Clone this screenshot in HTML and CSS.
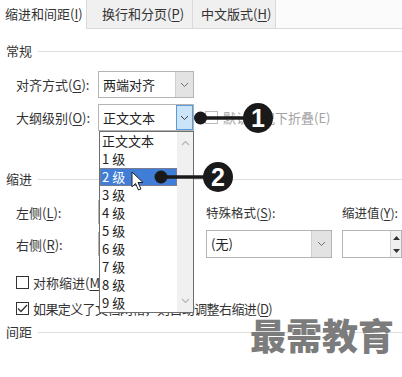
FILE: index.html
```html
<!DOCTYPE html>
<html lang="zh-CN">
<head>
    <meta charset="UTF-8">
    <title>段落</title>
    <link rel="stylesheet" href="styles.css">
</head>
<body>

    <div class="dialog">
        <div class="tabs">
            <div class="tab active">缩进和间距(<u>I</u>)</div>
            <div class="tab tab-2">换行和分页(<u>P</u>)</div>
            <div class="tab tab-3">中文版式(<u>H</u>)</div>
            <div class="tab-fill"></div>
        </div>

        <div class="group-title title-general">常规</div>

        <div class="form-row row-align">
            <span class="label">对齐方式(<u>G</u>):</span>
            <div class="select">
                <span class="value">两端对齐</span>
                <span class="arrow"><svg width="9" height="6" viewBox="0 0 9 6"><path d="M1 1 L4.5 4.5 L8 1" fill="none" stroke="#707070" stroke-width="1"/></svg></span>
            </div>
        </div>

        <div class="form-row row-outline">
            <span class="label">大纲级别(<u>O</u>):</span>
            <div class="select focused">
                <span class="value">正文文本</span>
                <span class="arrow"><svg width="9" height="6" viewBox="0 0 9 6"><path d="M1 1 L4.5 4.5 L8 1" fill="none" stroke="#404040" stroke-width="1"/></svg></span>
            </div>
            <span class="check disabled"><span class="box"></span>默认情况下折叠(E)</span>
        </div>

        <div class="group-title title-indent">缩进</div>

        <div class="indent-grid">
            <span class="label">左侧(<u>L</u>):</span>
            <div class="spin"></div>
            <span class="label top-label">特殊格式(<u>S</u>):</span>
            <span class="label top-label">缩进值(<u>Y</u>):</span>

            <span class="label">右侧(<u>R</u>):</span>
            <div class="spin"></div>
            <div class="select wide">
                <span class="value">(无)</span>
                <span class="arrow"><svg width="9" height="6" viewBox="0 0 9 6"><path d="M1 1 L4.5 4.5 L8 1" fill="none" stroke="#707070" stroke-width="1"/></svg></span>
            </div>
            <div class="spin small">
                <span class="spin-buttons">
                    <svg width="7" height="4" viewBox="0 0 7 4"><path d="M0 4 L3.5 0 L7 4 Z" fill="#333"/></svg>
                    <svg width="7" height="4" viewBox="0 0 7 4"><path d="M0 0 L3.5 4 L7 0 Z" fill="#333"/></svg>
                </span>
            </div>
        </div>

        <div class="check-row row-mirror"><span class="box"></span>对称缩进(<u>M</u>)</div>
        <div class="check-row row-grid"><span class="box"><svg width="11" height="9" viewBox="0 0 11 9"><path d="M1 4.5 L4 7.5 L10 1" fill="none" stroke="#333" stroke-width="1.3"/></svg></span><span class="tight">如果定义了文档网格，则自动调整右缩进(<u>D</u>)</span></div>

        <div class="group-title title-spacing">间距</div>
    </div>

    <!-- 展开的下拉列表 -->
    <div class="dropdown">
        <ul class="options">
            <li>正文文本</li>
            <li>1 级</li>
            <li class="selected">2 级</li>
            <li>3 级</li>
            <li>4 级</li>
            <li>5 级</li>
            <li>6 级</li>
            <li>7 级</li>
            <li>8 级</li>
            <li>9 级</li>
        </ul>
        <div class="scrollbar">
            <svg width="9" height="6" viewBox="0 0 9 6"><path d="M1 5 L4.5 1.5 L8 5" fill="none" stroke="#b5b5b5" stroke-width="1.2"/></svg>
            <svg width="9" height="6" viewBox="0 0 9 6"><path d="M1 1 L4.5 4.5 L8 1" fill="none" stroke="#b5b5b5" stroke-width="1.2"/></svg>
        </div>
    </div>

    <svg class="cursor" width="14" height="21" viewBox="0 0 14 21">
        <path d="M1 1 L1 16 L4.5 12.5 L7.5 19 L10 18 L7 11.5 L12 11.5 Z" fill="#fff" stroke="#222" stroke-width="1" stroke-linejoin="round"/>
    </svg>

    <!-- 标注 -->
    <svg class="callouts" width="402" height="377" viewBox="0 0 402 377">
        <line x1="200" y1="118" x2="250" y2="118" stroke="#1a1a1a" stroke-width="3.5"/>
        <circle cx="200.5" cy="118" r="6.5" fill="#1a1a1a"/>
        <circle cx="258" cy="118" r="15" fill="#1a1a1a"/>
        <text x="258" y="127" class="num">1</text>

        <line x1="161" y1="177" x2="210" y2="177" stroke="#1a1a1a" stroke-width="3.5"/>
        <circle cx="161" cy="177" r="6.5" fill="#1a1a1a"/>
        <circle cx="218" cy="177" r="15" fill="#1a1a1a"/>
        <text x="218" y="186" class="num">2</text>
    </svg>

    <div class="watermark">最需教育</div>

</body>
</html>
```
FILE: styles.css
```css
body {
    margin: 0;
    width: 402px;
    height: 377px;
    overflow: hidden;
    position: relative;
    background: #fff;
    font-family: "Noto Sans CJK SC", "Liberation Sans", sans-serif;
    font-size: 13px;
    color: #222;
}
.dialog {
    width: 402px;
    overflow: hidden;
}
u {
    text-decoration: underline;
    text-underline-offset: 2px;
}

/* 选项卡 */
.tabs {
    display: flex;
    height: 29px;
}
.tab {
    box-sizing: border-box;
    height: 29px;
    line-height: 28px;
    border-bottom: 1px solid #d9d9d9;
    background: #f0f0f0;
    border-left: 1px solid #d9d9d9;
    color: #333;
    white-space: nowrap;
}
.tab.active {
    width: 86px;
    padding-left: 5px;
    background: #fff;
    border-left: none;
    border-bottom-color: #fff;
}
.tab-2 {
    width: 106px;
    padding-left: 15px;
}
.tab-3 {
    width: 84px;
    padding-left: 8px;
    border-right: 1px solid #d9d9d9;
}
.tab-fill {
    flex: 1;
    border-bottom: 1px solid #d9d9d9;
    background: #fbfbfb;
}

/* 分组标题 */
.group-title {
    display: flex;
    align-items: center;
    height: 20px;
    line-height: 20px;
    padding-left: 6px;
    color: #333;
}
.group-title::after {
    content: "";
    flex: 1;
    height: 1px;
    background: #dedede;
    margin-left: 6px;
}
.title-general { margin-top: 12px; }
.title-indent { margin-top: 38px; }
.title-spacing { margin-top: 4px; }

.form-row {
    display: flex;
    align-items: center;
    height: 27px;
    padding-left: 16px;
}
.row-align { margin-top: 10px; }
.row-outline { margin-top: 6px; }
.label {
    width: 82px;
    flex-shrink: 0;
    color: #333;
    white-space: nowrap;
}

.select {
    box-sizing: border-box;
    display: flex;
    width: 96px;
    height: 27px;
    border: 1px solid #b4b4b4;
    background: #fff;
}
.select .value {
    flex: 1;
    padding-left: 4px;
    line-height: 25px;
    color: #222;
}
.select .arrow {
    width: 17px;
    display: flex;
    align-items: center;
    justify-content: center;
    background: #e3e3e3;
    border-left: 1px solid #cfcfcf;
}
.select.focused .arrow {
    background: #cce4f7;
    box-shadow: inset 0 0 0 1px #5a9bd8;
    border-left: none;
}
.select.wide {
    width: 126px;
    height: 28px;
}
.select.wide .value {
    line-height: 26px;
}
.select.wide .arrow {
    width: 19px;
}

.check {
    display: flex;
    align-items: center;
    margin-left: 11px;
    white-space: nowrap;
}
.check.disabled {
    color: #a3a3a3;
}
.box {
    box-sizing: border-box;
    width: 13px;
    height: 13px;
    border: 1px solid #333;
    background: #fff;
    margin-right: 5px;
    display: flex;
    align-items: center;
    justify-content: center;
    flex-shrink: 0;
}
.check.disabled .box {
    border-color: #bcbcbc;
}

/* 缩进 */
.indent-grid {
    display: grid;
    grid-template-columns: 82px 108px 136px 60px;
    grid-template-rows: 24px 28px;
    row-gap: 6px;
    align-items: center;
    padding-left: 16px;
    margin-top: 11px;
}
.spin {
    box-sizing: border-box;
    width: 96px;
    height: 24px;
    border: 1px solid #b4b4b4;
    background: #fff;
}
.spin.small {
    height: 28px;
    width: 60px;
    display: flex;
    justify-content: flex-end;
}
.spin-buttons {
    width: 10px;
    background: #f0f0f0;
    border-left: 1px solid #d0d0d0;
    display: flex;
    flex-direction: column;
    justify-content: space-around;
    align-items: center;
}
.top-label {
    width: auto;
    font-size: 12.5px;
}

.check-row {
    display: flex;
    align-items: center;
    height: 20px;
    padding-left: 16px;
    color: #333;
    white-space: nowrap;
}
.check-row .box {
    margin-right: 4px;
}
.tight {
    letter-spacing: -0.6px;
}
.row-mirror { margin-top: 14px; }
.row-grid { margin-top: 6px; }

/* 下拉列表 */
.dropdown {
    position: absolute;
    left: 99px;
    top: 131px;
    width: 95px;
    height: 182px;
    box-sizing: border-box;
    border: 1px solid #6e6e6e;
    background: #fff;
    display: flex;
}
.options {
    list-style: none;
    margin: 0;
    padding: 0;
    flex: 1;
}
.options li {
    height: 18px;
    line-height: 18px;
    padding-left: 2px;
    color: #222;
}
.options li.selected {
    background: #3f7dd6;
    color: #fff;
    box-shadow: inset 0 0 0 1px #787c92;
}
.scrollbar {
    width: 16px;
    background: #f0f0f0;
    display: flex;
    flex-direction: column;
    justify-content: space-between;
    align-items: center;
    padding: 8px 0;
}

.cursor {
    position: absolute;
    left: 131px;
    top: 171px;
}

.callouts {
    position: absolute;
    left: 0;
    top: 0;
}
.num {
    fill: #fff;
    font-family: "Liberation Sans", sans-serif;
    font-weight: bold;
    font-size: 25px;
    text-anchor: middle;
}

.watermark {
    position: absolute;
    left: 250px;
    top: 314px;
    font-size: 36px;
    line-height: 40px;
    font-weight: 900;
    color: #7c7c7c;
}
```
